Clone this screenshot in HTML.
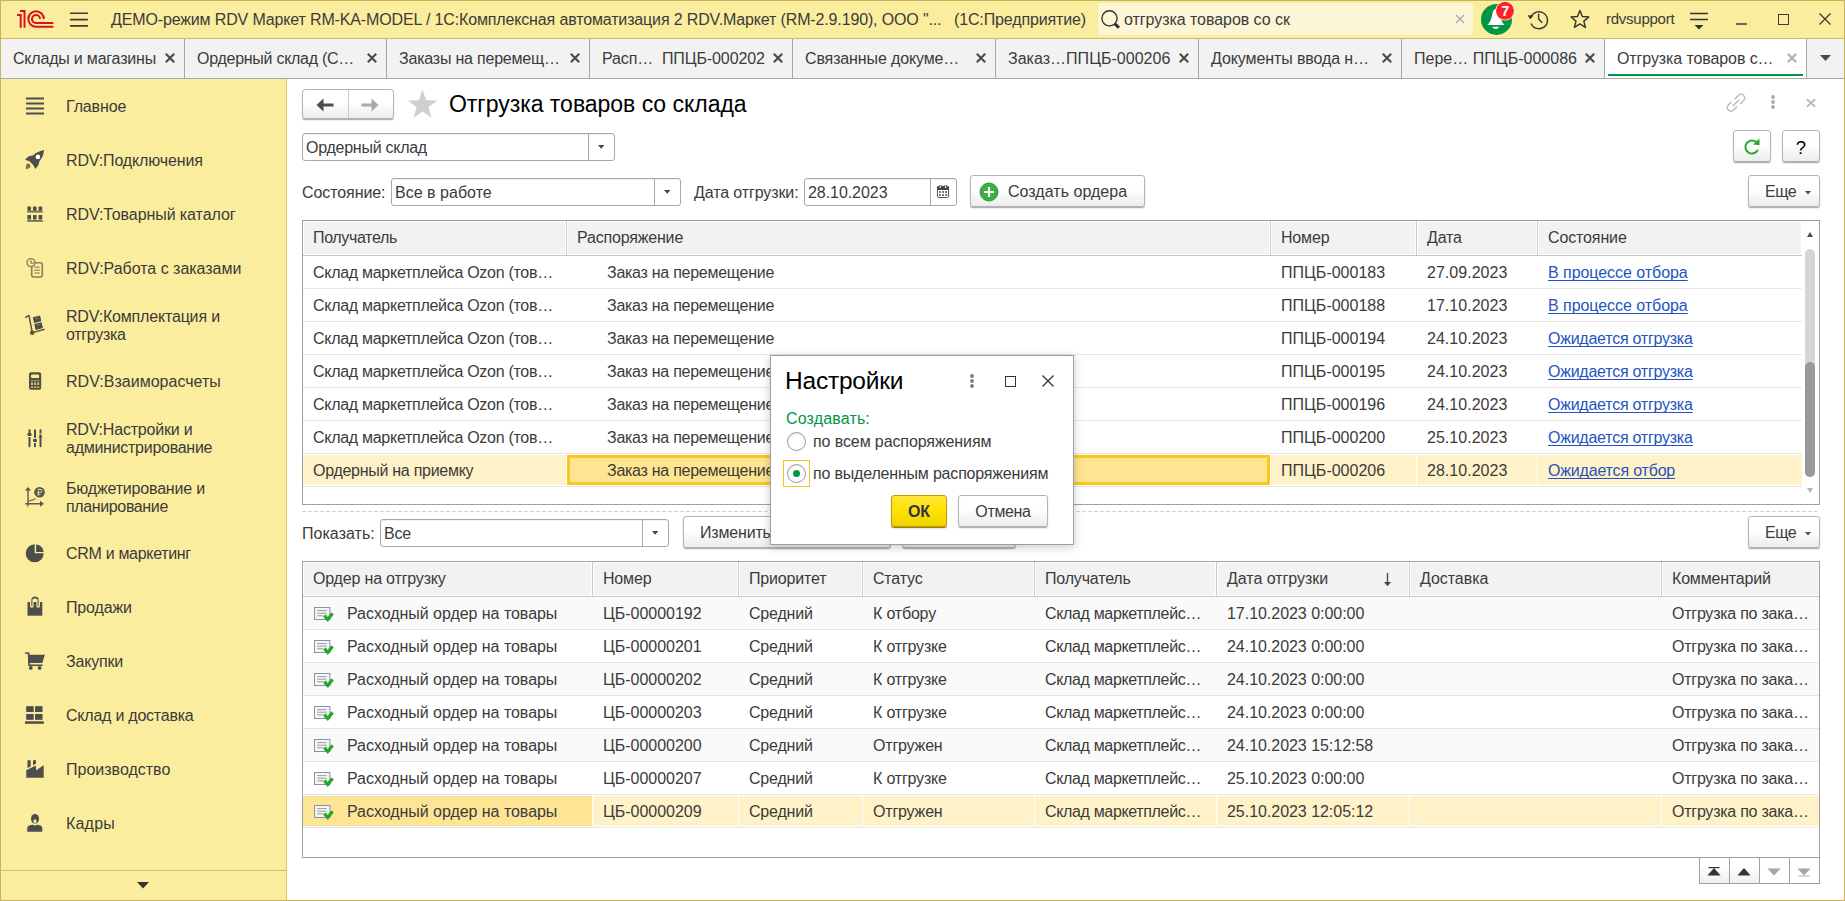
<!DOCTYPE html>
<html><head><meta charset="utf-8"><title>1C</title>
<style>
*{box-sizing:border-box;margin:0;padding:0}
html,body{width:1845px;height:901px;overflow:hidden;background:#fff}
body{font-family:"Liberation Sans",sans-serif;font-size:16px;color:#3b3b3b;position:relative;letter-spacing:-0.18px}
.a{position:absolute}
.t{position:absolute;white-space:nowrap;line-height:20px;height:20px;margin-top:1px}
.btn{position:absolute;border:1px solid #b4b4b4;border-radius:3px;background:linear-gradient(#ffffff 0%,#ffffff 45%,#ececec 100%);box-shadow:0 1px 1px rgba(0,0,0,.3),0 2px 1px rgba(0,0,0,.05)}
.inp{position:absolute;border:1px solid #a9a9a9;border-radius:3px;background:#fff;box-shadow:inset 0 1px 0 rgba(0,0,0,.06)}
.lnk{color:#2553c0;text-decoration:underline;text-underline-offset:2px;text-decoration-skip-ink:none;text-decoration-thickness:1px}
svg{position:absolute;overflow:visible}
</style></head><body>

<div class="a" style="left:0;top:0;width:1845px;height:901px;background:#c4b45c"></div>
<div class="a" style="left:1px;top:1px;width:1843px;height:37px;background:#fbed9e"></div>
<div class="a" style="left:1px;top:38px;width:1843px;height:1px;background:#c9bb6b"></div>
<div class="a" style="left:1px;top:39px;width:1843px;height:39px;background:#f2f2f2"></div>
<div class="a" style="left:1px;top:78px;width:1843px;height:1px;background:#a6a6a6"></div>
<div class="a" style="left:1px;top:79px;width:285px;height:821px;background:#fbed9e"></div>
<div class="a" style="left:286px;top:79px;width:1px;height:821px;background:#d6c66e"></div>
<div class="a" style="left:287px;top:79px;width:1557px;height:821px;background:#fff"></div>
<svg style="left:0px;top:0px" width="60" height="36" viewBox="0 0 60 36">
<g fill="none" stroke="#dc1018" stroke-width="2">
<path d="M17 15.1 H20.7 V27.8"/>
<path d="M20 11.1 H24.5 V27.8"/>
<path d="M43.9 18.9 A7.8 7.8 0 1 0 36.1 26.8 H53.4"/>
<path d="M40 19 A4 4 0 1 0 36 23 H53.4"/>
</g></svg>
<svg style="left:70px;top:10px" width="18" height="20" viewBox="0 0 18 20"><path d="M0.6 3.3 H17.4 M0.6 9.6 H17.4 M0.6 15.9 H17.4" stroke="#3a3a3a" stroke-width="1.6" stroke-linecap="round"/></svg>
<div class="t" style="left:111px;top:9px;color:#3b3b3b;letter-spacing:-0.144px">ДЕМО-режим RDV Маркет RM-KA-MODEL / 1С:Комплексная автоматизация 2 RDV.Маркет (RM-2.9.190), ООО "...</div>
<div class="t" style="left:954px;top:9px;color:#3b3b3b;letter-spacing:-0.14px">(1С:Предприятие)</div>
<div class="a" style="left:1098px;top:3px;width:375px;height:32px;background:#fdf6d6;border-radius:3px"></div>
<svg style="left:1100px;top:9px" width="22" height="22" viewBox="0 0 22 22"><circle cx="9.5" cy="9.3" r="7.6" fill="none" stroke="#333" stroke-width="1.4"/><path d="M14.7 14.6 L18.9 18.8" stroke="#2e2e2e" stroke-width="2.9" stroke-linecap="butt"/></svg>
<div class="t" style="left:1124px;top:9px;letter-spacing:-0.05px">отгрузка товаров со ск</div>
<svg style="left:1455px;top:14px" width="10" height="10" viewBox="0 0 10 10"><path d="M1 1 L9 9 M9 1 L1 9" stroke="#a9a9a9" stroke-width="1.2"/></svg>
<svg style="left:1480px;top:1px" width="36" height="36" viewBox="0 0 36 36">
<circle cx="16.5" cy="18.4" r="15.5" fill="#009646"/>
<path d="M16 8 C13.6 8 12.8 10.5 12.2 13.5 C11.4 17.5 10.5 21 7.4 24 H24.6 C21.5 21 20.6 17.5 19.8 13.5 C19.2 10.5 18.4 8 16 8 Z" fill="#fff"/>
<path d="M12.2 25.7 H19.2 C18.4 27.4 17.2 27.9 15.7 27.9 C14.2 27.9 13 27.4 12.2 25.7 Z" fill="#fff"/>
<circle cx="25" cy="9.8" r="9.7" fill="#fff"/>
<circle cx="25" cy="9.8" r="9" fill="#ff2020"/>
<text x="25.2" y="15" text-anchor="middle" font-family="Liberation Sans" font-weight="bold" font-size="14.5" fill="#fff" letter-spacing="0">7</text>
</svg>
<svg style="left:1525px;top:5px" width="30" height="30" viewBox="0 0 30 30">
<path d="M5.9 12.6 A8.5 8.5 0 1 1 6.1 18.4" fill="none" stroke="#333" stroke-width="1.4"/>
<path d="M2.6 10.2 L8.4 10.4 L5.2 14.2 Z" fill="#333"/>
<path d="M13.6 8.8 V14 L17.2 17.8" fill="none" stroke="#333" stroke-width="1.4"/></svg>
<svg style="left:1565px;top:5px" width="30" height="30" viewBox="0 0 30 30"><path d="M14.90 5.45 L17.31 11.53 L23.84 11.95 L18.80 16.12 L20.43 22.45 L14.90 18.95 L9.37 22.45 L11.00 16.12 L5.96 11.95 L12.49 11.53 Z" fill="none" stroke="#333" stroke-width="1.4" stroke-linejoin="round"/></svg>
<div class="t" style="left:1606px;top:8px;font-size:15px;letter-spacing:-0.25px">rdvsupport</div>
<svg style="left:1690px;top:10px" width="18" height="10" viewBox="0 0 18 10"><path d="M0 3.5 H18 M0 9.5 H18" stroke="#333" stroke-width="1.3"/></svg>
<svg style="left:1694px;top:25px" width="10" height="5" viewBox="0 0 10 5"><path d="M0.5 0 H9.5 L5 4.5 Z" fill="#333"/></svg>
<svg style="left:1736px;top:20px" width="11" height="8" viewBox="0 0 11 8"><path d="M0 4 H11" stroke="#333" stroke-width="1.4"/></svg>
<div class="a" style="left:1778px;top:14px;width:11px;height:11px;border:1.3px solid #3b3b3b"></div>
<svg style="left:1819px;top:13px" width="12" height="12" viewBox="0 0 12 12"><path d="M0.5 0.5 L11.5 11.5 M11.5 0.5 L0.5 11.5" stroke="#3b3b3b" stroke-width="1.3"/></svg>
<div class="a" style="left:184px;top:39px;width:1px;height:39px;background:#a6a6a6"></div>
<div class="t" style="left:13px;top:48px;white-space:pre;letter-spacing:-0.2px">Склады и магазины</div>
<svg style="left:165px;top:53px" width="10" height="10" viewBox="0 0 10 10"><path d="M0.8 0.8 L9.2 9.2 M9.2 0.8 L0.8 9.2" stroke="#4a4a4a" stroke-width="2.1"/></svg>
<div class="a" style="left:386px;top:39px;width:1px;height:39px;background:#a6a6a6"></div>
<div class="t" style="left:197px;top:48px;white-space:pre;letter-spacing:-0.27px">Ордерный склад (С…</div>
<svg style="left:367px;top:53px" width="10" height="10" viewBox="0 0 10 10"><path d="M0.8 0.8 L9.2 9.2 M9.2 0.8 L0.8 9.2" stroke="#4a4a4a" stroke-width="2.1"/></svg>
<div class="a" style="left:589px;top:39px;width:1px;height:39px;background:#a6a6a6"></div>
<div class="t" style="left:399px;top:48px;white-space:pre;letter-spacing:-0.21px">Заказы на перемещ…</div>
<svg style="left:570px;top:53px" width="10" height="10" viewBox="0 0 10 10"><path d="M0.8 0.8 L9.2 9.2 M9.2 0.8 L0.8 9.2" stroke="#4a4a4a" stroke-width="2.1"/></svg>
<div class="a" style="left:792px;top:39px;width:1px;height:39px;background:#a6a6a6"></div>
<div class="t" style="left:602px;top:48px;white-space:pre;letter-spacing:-0.1px">Расп…  ППЦБ-000202</div>
<svg style="left:773px;top:53px" width="10" height="10" viewBox="0 0 10 10"><path d="M0.8 0.8 L9.2 9.2 M9.2 0.8 L0.8 9.2" stroke="#4a4a4a" stroke-width="2.1"/></svg>
<div class="a" style="left:995px;top:39px;width:1px;height:39px;background:#a6a6a6"></div>
<div class="t" style="left:805px;top:48px;white-space:pre;letter-spacing:-0.13px">Связанные докуме…</div>
<svg style="left:976px;top:53px" width="10" height="10" viewBox="0 0 10 10"><path d="M0.8 0.8 L9.2 9.2 M9.2 0.8 L0.8 9.2" stroke="#4a4a4a" stroke-width="2.1"/></svg>
<div class="a" style="left:1198px;top:39px;width:1px;height:39px;background:#a6a6a6"></div>
<div class="t" style="left:1008px;top:48px;white-space:pre;letter-spacing:0.02px">Заказ…ППЦБ-000206</div>
<svg style="left:1179px;top:53px" width="10" height="10" viewBox="0 0 10 10"><path d="M0.8 0.8 L9.2 9.2 M9.2 0.8 L0.8 9.2" stroke="#4a4a4a" stroke-width="2.1"/></svg>
<div class="a" style="left:1401px;top:39px;width:1px;height:39px;background:#a6a6a6"></div>
<div class="t" style="left:1211px;top:48px;white-space:pre;letter-spacing:-0.1px">Документы ввода н…</div>
<svg style="left:1382px;top:53px" width="10" height="10" viewBox="0 0 10 10"><path d="M0.8 0.8 L9.2 9.2 M9.2 0.8 L0.8 9.2" stroke="#4a4a4a" stroke-width="2.1"/></svg>
<div class="a" style="left:1604px;top:39px;width:1px;height:39px;background:#a6a6a6"></div>
<div class="t" style="left:1414px;top:48px;white-space:pre;letter-spacing:0.02px">Пере… ППЦБ-000086</div>
<svg style="left:1585px;top:53px" width="10" height="10" viewBox="0 0 10 10"><path d="M0.8 0.8 L9.2 9.2 M9.2 0.8 L0.8 9.2" stroke="#4a4a4a" stroke-width="2.1"/></svg>
<div class="a" style="left:1605px;top:39px;width:201px;height:39px;background:#fff"></div>
<div class="a" style="left:1608px;top:74px;width:195px;height:2px;background:#009646"></div>
<div class="a" style="left:1806px;top:39px;width:1px;height:39px;background:#a6a6a6"></div>
<div class="t" style="left:1617px;top:48px;white-space:pre;letter-spacing:-0.1px">Отгрузка товаров с…</div>
<svg style="left:1787px;top:53px" width="10" height="10" viewBox="0 0 10 10"><path d="M0.8 0.8 L9.2 9.2 M9.2 0.8 L0.8 9.2" stroke="#b0b0b0" stroke-width="2.1"/></svg>
<svg style="left:1820px;top:55px" width="11" height="6" viewBox="0 0 11 6"><path d="M0 0 H11 L5.5 6 Z" fill="#4a4a4a"/></svg>
<svg style="left:25px;top:96px" width="20" height="20" viewBox="0 0 20 20"><path d="M1 2.5 H19 M1 7.5 H19 M1 12.5 H19 M1 17.5 H19" stroke="#4d4d4d" stroke-width="2.2"/></svg>
<div class="t" style="left:66px;top:96px;line-height:18px;height:auto;line-height:20px;color:#3b3b3b"><span style="letter-spacing:-0.13px">Главное</span></div>
<svg style="left:25px;top:150px" width="20" height="20" viewBox="0 0 20 20"><path d="M19 0 C14 1 10.5 3 8.3 5.2 L3.4 6.6 L0 9.8 L4.6 11.2 L8.6 15.6 L10.3 19 L13.2 15.4 L14.6 10.9 C17 8.4 18.6 5 19 0 Z" fill="#4d4d4d"/><circle cx="12.9" cy="6.9" r="2.3" fill="#fff"/><path d="M1.2 14.6 C2 13.2 4 13 5 14.4 C6 15.8 5.4 17.6 3.6 18.4 L0.8 19.2 Z" fill="#7a7552"/></svg>
<div class="t" style="left:66px;top:150px;line-height:18px;height:auto;line-height:20px;color:#3b3b3b"><span style="letter-spacing:-0.14px">RDV:Подключения</span></div>
<svg style="left:25px;top:204px" width="20" height="20" viewBox="0 0 20 20"><rect x="2.4" y="2.4" width="3.6" height="4.4" rx="0.6" fill="#4d4d4d"/><rect x="2.4" y="10.9" width="3.6" height="4.6" rx="0.6" fill="#4d4d4d"/><rect x="8.0" y="2.4" width="3.6" height="4.4" rx="0.6" fill="#4d4d4d"/><rect x="8.0" y="10.9" width="3.6" height="4.6" rx="0.6" fill="#4d4d4d"/><rect x="13.6" y="2.4" width="3.6" height="4.4" rx="0.6" fill="#4d4d4d"/><rect x="13.6" y="10.9" width="3.6" height="4.6" rx="0.6" fill="#4d4d4d"/><rect x="2.2" y="6.6" width="15.6" height="2" fill="#77724e"/><rect x="2.2" y="16" width="15.6" height="1.8" fill="#77724e"/></svg>
<div class="t" style="left:66px;top:204px;line-height:18px;height:auto;line-height:20px;color:#3b3b3b"><span style="letter-spacing:-0.08px">RDV:Товарный каталог</span></div>
<svg style="left:25px;top:258px" width="20" height="20" viewBox="0 0 20 20"><rect x="6.7" y="4.7" width="10.6" height="14.3" rx="2" fill="none" stroke="#857f5c" stroke-width="1.6"/><path d="M9.3 9.3 H14.7 M9.3 12.2 H14.7 M9.3 15 H14.7" stroke="#a49d70" stroke-width="1.5"/><circle cx="6" cy="4.6" r="4" fill="#fbed9e" stroke="#857f5c" stroke-width="1.4"/><path d="M6 2.2 V5.2 H8.8" fill="none" stroke="#857f5c" stroke-width="1.2"/></svg>
<div class="t" style="left:66px;top:258px;line-height:18px;height:auto;line-height:20px;color:#3b3b3b"><span style="letter-spacing:-0.02px">RDV:Работа с заказами</span></div>
<svg style="left:25px;top:315px" width="20" height="20" viewBox="0 0 20 20"><path d="M0.4 3 C1 1.6 2.4 0.8 4 0.8 L7.3 17.6 L19.6 14.2" fill="none" stroke="#5a563f" stroke-width="1.5"/><circle cx="7.2" cy="17.8" r="2.3" fill="#5a563f"/><path d="M7.8 2.3 L15.1 0.6 L16.3 6.2 L9 7.9 Z M9.3 8.9 L16.6 7.2 L17.9 13.1 L10.6 14.9 Z" fill="#4d4d4d"/><path d="M10.6 3.6 L13.4 3 M12 10.2 L14.8 9.6" stroke="#8a8460" stroke-width="1"/></svg>
<div class="t" style="left:66px;top:307px;line-height:18px;height:auto;color:#3b3b3b"><span style="letter-spacing:-0.18px">RDV:Комплектация и</span><br><span style="letter-spacing:-0.3px">отгрузка</span></div>
<svg style="left:25px;top:371px" width="20" height="20" viewBox="0 0 20 20"><rect x="4" y="1.2" width="12.2" height="17.6" rx="2" fill="#55523e"/><rect x="6" y="3.6" width="8.2" height="3.4" rx="1.3" fill="#fbed9e"/><rect x="6" y="9.2" width="2" height="1" fill="#c7be80"/><rect x="6" y="11.4" width="2" height="2.6" fill="#c7be80"/><rect x="6" y="15.4" width="2" height="1.6" fill="#c7be80"/><rect x="9.1" y="9.2" width="2" height="1" fill="#c7be80"/><rect x="9.1" y="11.4" width="2" height="2.6" fill="#c7be80"/><rect x="9.1" y="15.4" width="2" height="1.6" fill="#c7be80"/><rect x="12.2" y="9.2" width="2" height="1" fill="#c7be80"/><rect x="12.2" y="11.4" width="2" height="2.6" fill="#c7be80"/><rect x="12.2" y="15.4" width="2" height="1.6" fill="#c7be80"/></svg>
<div class="t" style="left:66px;top:371px;line-height:18px;height:auto;line-height:20px;color:#3b3b3b"><span style="letter-spacing:0.02px">RDV:Взаиморасчеты</span></div>
<svg style="left:25px;top:428px" width="20" height="20" viewBox="0 0 20 20"><path d="M4.5 2.3 V18.3 M10 2.3 V18.3 M15.5 2.3 V18.3" stroke="#4d4d4d" stroke-width="2" stroke-linecap="round"/><path d="M3 8.5 H6 M8.5 10.3 H11.5 M8.5 14.5 H11.5 M14 5.9 H17" stroke="#fbed9e" stroke-width="1"/><rect x="2.5" y="5" width="4" height="3" rx="1" fill="#4d4d4d"/><rect x="8" y="11" width="4" height="3" rx="1" fill="#4d4d4d"/><path d="M13.5 9.4 L15.5 6.6 L17.5 9.4 Z" fill="#4d4d4d"/></svg>
<div class="t" style="left:66px;top:420px;line-height:18px;height:auto;color:#3b3b3b"><span style="letter-spacing:-0.2px">RDV:Настройки и</span><br><span style="letter-spacing:-0.27px">администрирование</span></div>
<svg style="left:25px;top:487px" width="20" height="20" viewBox="0 0 20 20"><path d="M3 2 V19.6 M0.2 16.8 H17" fill="none" stroke="#5f5b45" stroke-width="1.4"/><path d="M0 3.6 L3 0 L6 3.6 Z M15 13.8 L18.9 16.8 L15 19.8 Z" fill="#555"/><path d="M3.4 14.6 L6 13 L7 13.4 L10.6 11.4" fill="none" stroke="#5f5b45" stroke-width="1.1"/><circle cx="14.5" cy="5.3" r="5.3" fill="#555"/><path d="M13.4 8.8 V2.4 H15.3 A1.55 1.55 0 0 1 15.3 5.5 H12.2 M12.2 7.2 H15.6" fill="none" stroke="#cfc58a" stroke-width="1.1"/></svg>
<div class="t" style="left:66px;top:479px;line-height:18px;height:auto;color:#3b3b3b"><span style="letter-spacing:-0.179px">Бюджетирование и</span><br><span style="letter-spacing:-0.37px">планирование</span></div>
<svg style="left:25px;top:543px" width="20" height="20" viewBox="0 0 20 20"><path d="M9.7 10.3 V1.3 A9 9 0 1 0 18.7 10.3 Z" fill="#4d4d4d"/><path d="M11.1 8.9 V1.4 A7.6 7.6 0 0 1 18.6 8.9 Z" fill="#4d4d4d"/></svg>
<div class="t" style="left:66px;top:543px;line-height:18px;height:auto;line-height:20px;color:#3b3b3b"><span style="letter-spacing:-0.31px">CRM и маркетинг</span></div>
<svg style="left:25px;top:597px" width="20" height="20" viewBox="0 0 20 20"><rect x="2.5" y="5" width="14.8" height="13.7" fill="#4d4d4d"/><path d="M6.8 9 V3.4 A3.2 3.2 0 0 1 13.2 3.4 V9" fill="none" stroke="#fbed9e" stroke-width="3.6" stroke-linecap="round"/><rect x="2.5" y="0" width="14.8" height="5" fill="#fbed9e"/><path d="M6.8 8.6 V3.4 A3.2 3.2 0 0 1 13.2 3.4 V8.6" fill="none" stroke="#8a845e" stroke-width="1.6" stroke-linecap="round"/><path d="M7.4 1.8 A3.2 3.2 0 0 1 12.6 1.8" fill="none" stroke="#4d4d4d" stroke-width="1.6"/></svg>
<div class="t" style="left:66px;top:597px;line-height:18px;height:auto;line-height:20px;color:#3b3b3b"><span style="letter-spacing:-0.15px">Продажи</span></div>
<svg style="left:25px;top:651px" width="20" height="20" viewBox="0 0 20 20"><path d="M0 2 H3.6 L4.1 14.3 H17.6" fill="none" stroke="#4d4d4d" stroke-width="1.6"/><path d="M2.8 3.8 H19.8 L17.3 12 H3.3 Z" fill="#4d4d4d"/><circle cx="5.8" cy="16.9" r="1.9" fill="#4d4d4d"/><circle cx="14.6" cy="16.9" r="1.9" fill="#4d4d4d"/></svg>
<div class="t" style="left:66px;top:651px;line-height:18px;height:auto;line-height:20px;color:#3b3b3b"><span style="letter-spacing:-0.2px">Закупки</span></div>
<svg style="left:25px;top:705px" width="20" height="20" viewBox="0 0 20 20"><rect x="1.2" y="1.2" width="7.5" height="5.8" fill="#4d4d4d"/><rect x="10" y="1.2" width="7.5" height="5.8" fill="#4d4d4d"/><rect x="1.2" y="9" width="7.5" height="5.8" fill="#4d4d4d"/><rect x="10" y="9" width="7.5" height="5.8" fill="#4d4d4d"/><rect x="0" y="16.3" width="18.8" height="2.5" fill="#4d4d4d"/></svg>
<div class="t" style="left:66px;top:705px;line-height:18px;height:auto;line-height:20px;color:#3b3b3b"><span style="letter-spacing:-0.229px">Склад и доставка</span></div>
<svg style="left:25px;top:759px" width="20" height="20" viewBox="0 0 20 20"><path d="M1.3 11.3 L10.7 6.5 L11.3 11.3 L18.7 6.3 V18.7 H1.3 Z" fill="#4d4d4d"/><path d="M2.5 1.3 H5.7 V7.4 L2.5 9 Z M8 1.3 H11 V4.6 L8 6.2 Z" fill="#4d4d4d"/></svg>
<div class="t" style="left:66px;top:759px;line-height:18px;height:auto;line-height:20px;color:#3b3b3b"><span style="letter-spacing:0.0px">Производство</span></div>
<svg style="left:25px;top:813px" width="20" height="20" viewBox="0 0 20 20"><ellipse cx="10" cy="5.8" rx="4" ry="4.9" fill="#4d4d4d"/><ellipse cx="10" cy="8.3" rx="1.5" ry="2.1" fill="#fbed9e"/><path d="M2.3 18.8 V15.2 C2.3 12.6 5.6 11.9 8 11.7 L10 12.7 L12 11.7 C14.4 11.9 17.3 12.6 17.3 15.2 V18.8 Z" fill="#4d4d4d"/></svg>
<div class="t" style="left:66px;top:813px;line-height:18px;height:auto;line-height:20px;color:#3b3b3b"><span style="letter-spacing:0.2px">Кадры</span></div>
<div class="a" style="left:1px;top:870px;width:285px;height:1px;background:#d0c070"></div>
<svg style="left:137px;top:881.6px" width="12" height="7" viewBox="0 0 12 7"><path d="M0 0 H12 L6 6.6 Z" fill="#333"/></svg>
<div class="btn" style="left:302px;top:89px;width:92px;height:30px"></div>
<div class="a" style="left:348px;top:90px;width:1px;height:28px;background:#c8c8c8"></div>
<svg style="left:316px;top:97.5px" width="18" height="14" viewBox="0 0 18 14"><path d="M0.5 7 L7.5 0.6 V5.4 H17.5 V8.6 H7.5 V13.4 Z" fill="#4d4d4d"/></svg>
<svg style="left:361px;top:97.5px" width="18" height="14" viewBox="0 0 18 14"><path d="M17.5 7 L10.5 0.6 V5.4 H0.5 V8.6 H10.5 V13.4 Z" fill="#a8a8a8"/></svg>
<svg style="left:407px;top:89px" width="31" height="30" viewBox="0 0 31 30"><path d="M15.5 0.8 L19.2 11.2 L30.2 11.4 L21.4 18.2 L24.6 28.8 L15.5 22.4 L6.4 28.8 L9.6 18.2 L0.8 11.4 L11.8 11.2 Z" fill="#cfcfcf"/></svg>
<div class="t" style="left:449px;top:89px;font-size:23px;line-height:28px;height:28px;color:#000;letter-spacing:-0.03px">Отгрузка товаров со склада</div>
<svg style="left:1726px;top:93px" width="20" height="20" viewBox="0 0 20 20"><g fill="none" stroke="#b9b9b9" stroke-width="1.45" stroke-linecap="round"><path d="M9 5.8 L12.4 2.4 A3.65 3.65 0 0 1 17.6 7.6 L14.6 10.6"/><path d="M5 9.3 L2.4 11.9 A3.65 3.65 0 0 0 7.6 17.1 L10.6 14.1"/><path d="M7.2 12.6 L12.6 7.4"/></g></svg>
<svg style="left:1770px;top:94.2px" width="6" height="6" viewBox="0 0 6 6"><circle cx="3" cy="3" r="1.95" fill="#aaaaaa"/></svg>
<svg style="left:1770px;top:99.2px" width="6" height="6" viewBox="0 0 6 6"><circle cx="3" cy="3" r="1.95" fill="#aaaaaa"/></svg>
<svg style="left:1770px;top:104.2px" width="6" height="6" viewBox="0 0 6 6"><circle cx="3" cy="3" r="1.95" fill="#aaaaaa"/></svg>
<svg style="left:1806px;top:98px" width="10" height="10" viewBox="0 0 10 10"><path d="M0.9 1.1 L9.1 8.9 M9.1 1.1 L0.9 8.9" stroke="#b0b0b0" stroke-width="1.5"/></svg>
<div class="inp" style="left:302px;top:133px;width:313px;height:28px"></div>
<div class="t" style="left:306px;top:137px;color:#3b3b3b;letter-spacing:-0.26px">Ордерный склад</div>
<div class="a" style="left:588px;top:134px;width:1px;height:26px;background:#a9a9a9"></div>
<svg style="left:598px;top:145px" width="7" height="4" viewBox="0 0 7 4"><path d="M0 0 H6.4 L3.2 3.8 Z" fill="#444"/></svg>
<div class="t" style="left:302px;top:182px;color:#3b3b3b;letter-spacing:-0.08px">Состояние:</div>
<div class="inp" style="left:391px;top:178px;width:290px;height:28px"></div>
<div class="t" style="left:395px;top:182px;color:#3b3b3b;letter-spacing:0.02px">Все в работе</div>
<div class="a" style="left:654px;top:179px;width:1px;height:26px;background:#a9a9a9"></div>
<svg style="left:664px;top:190px" width="7" height="4" viewBox="0 0 7 4"><path d="M0 0 H6.4 L3.2 3.8 Z" fill="#444"/></svg>
<div class="t" style="left:694px;top:182px;color:#3b3b3b;letter-spacing:-0.11px">Дата отгрузки:</div>
<div class="inp" style="left:804px;top:178px;width:153px;height:28px"></div>
<div class="t" style="left:808px;top:182px;color:#3b3b3b;letter-spacing:-0.06px">28.10.2023</div>
<div class="a" style="left:930px;top:179px;width:1px;height:26px;background:#a9a9a9"></div>
<svg style="left:937px;top:185px" width="12" height="13" viewBox="0 0 12 13"><rect x="0.45" y="1.4" width="11.1" height="11.1" rx="1.3" fill="#fff" stroke="#444" stroke-width="0.9"/><path d="M0.1 5 V2.6 A1.5 1.5 0 0 1 1.6 1.1 H10.4 A1.5 1.5 0 0 1 11.9 2.6 V5 Z" fill="#444"/><ellipse cx="3.3" cy="1.8" rx="1.5" ry="1.8" fill="#444"/><ellipse cx="8.6" cy="1.8" rx="1.5" ry="1.8" fill="#444"/><ellipse cx="3.3" cy="1.9" rx="0.7" ry="1.15" fill="#fff"/><ellipse cx="8.6" cy="1.9" rx="0.7" ry="1.15" fill="#fff"/>
<g fill="#333"><rect x="2.1" y="6.2" width="1.6" height="1.6"/><rect x="5.2" y="6.2" width="1.6" height="1.6"/><rect x="8.3" y="6.2" width="1.6" height="1.6"/><rect x="2.1" y="9.2" width="1.6" height="1.6"/><rect x="5.2" y="9.2" width="1.6" height="1.6"/><rect x="8.3" y="9.2" width="1.6" height="1.6"/></g></svg>
<div class="btn" style="left:970px;top:175px;width:175px;height:32px"></div>
<svg style="left:979px;top:182px" width="20" height="20" viewBox="0 0 20 20"><circle cx="10" cy="10" r="9" fill="#3cb043" stroke="#2e9a36" stroke-width="1"/><path d="M10 5 V15 M5 10 H15" stroke="#fff" stroke-width="2.2"/></svg>
<div class="t" style="left:1008px;top:181px;color:#3b3b3b;letter-spacing:0.03px">Создать ордера</div>
<div class="btn" style="left:1733px;top:130px;width:38px;height:32px"></div>
<svg style="left:1742px;top:137px" width="20" height="20" viewBox="0 0 20 20"><path d="M15.9 12.9 A6.6 6.6 0 1 1 14.4 5.1" fill="none" stroke="#2aa62e" stroke-width="2"/><path d="M11 7.4 L17.6 8.2 L17.4 1.4 Z" fill="#2aa62e"/></svg>
<div class="btn" style="left:1782px;top:130px;width:38px;height:32px"></div>
<div class="t" style="left:1782px;top:137px;width:38px;text-align:center;color:#000;font-size:18.5px;letter-spacing:0">?</div>
<div class="btn" style="left:1748px;top:175px;width:72px;height:32px"></div>
<div class="t" style="left:1765px;top:181px;color:#3b3b3b;letter-spacing:-0.5px">Еще</div>
<svg style="left:1805px;top:190.8px" width="6" height="4" viewBox="0 0 6 4"><path d="M0 0 H6 L3 3.5 Z" fill="#4d4d4d"/></svg>
<div class="btn" style="left:1748px;top:516px;width:72px;height:32px"></div>
<div class="t" style="left:1765px;top:522px;color:#3b3b3b;letter-spacing:-0.5px">Еще</div>
<svg style="left:1805px;top:531.8px" width="6" height="4" viewBox="0 0 6 4"><path d="M0 0 H6 L3 3.5 Z" fill="#4d4d4d"/></svg>
<div class="a" style="left:302px;top:220px;width:1518px;height:285px;border:1px solid #a0a0a0;background:#fff"></div>
<div class="a" style="left:303px;top:221px;width:1498px;height:34px;background:#f2f2f2;border-top:1px solid #fff;border-left:1px solid #fff;border-bottom:1px solid #fff"></div>
<div class="a" style="left:303px;top:255px;width:1499px;height:1px;background:#c6c6c6"></div>
<div class="t" style="left:313px;top:227px;color:#3b3b3b;letter-spacing:-0.36px">Получатель</div>
<div class="a" style="left:565px;top:222px;width:3px;height:33px;background:#fff"></div>
<div class="a" style="left:566px;top:221px;width:1px;height:34px;background:#cbcbcb"></div>
<div class="t" style="left:577px;top:227px;color:#3b3b3b;letter-spacing:-0.18px">Распоряжение</div>
<div class="a" style="left:1269px;top:222px;width:3px;height:33px;background:#fff"></div>
<div class="a" style="left:1270px;top:221px;width:1px;height:34px;background:#cbcbcb"></div>
<div class="t" style="left:1281px;top:227px;color:#3b3b3b;letter-spacing:-0.18px">Номер</div>
<div class="a" style="left:1415px;top:222px;width:3px;height:33px;background:#fff"></div>
<div class="a" style="left:1416px;top:221px;width:1px;height:34px;background:#cbcbcb"></div>
<div class="t" style="left:1427px;top:227px;color:#3b3b3b;letter-spacing:-0.18px">Дата</div>
<div class="a" style="left:1536px;top:222px;width:3px;height:33px;background:#fff"></div>
<div class="a" style="left:1537px;top:221px;width:1px;height:34px;background:#cbcbcb"></div>
<div class="t" style="left:1548px;top:227px;color:#3b3b3b;letter-spacing:-0.13px">Состояние</div>
<div class="a" style="left:303px;top:288px;width:1499px;height:1px;background:#e6e6e6"></div>
<div class="t" style="left:313px;top:262px;letter-spacing:-0.285px">Склад маркетплейса Ozon (тов…</div>
<div class="t" style="left:607px;top:262px;letter-spacing:-0.27px">Заказ на перемещение</div>
<div class="t" style="left:1281px;top:262px;letter-spacing:0.01px">ППЦБ-000183</div>
<div class="t" style="left:1427px;top:262px;letter-spacing:0.03px">27.09.2023</div>
<div class="t lnk" style="left:1548px;top:262px;letter-spacing:-0.05px">В процессе отбора</div>
<div class="a" style="left:303px;top:321px;width:1499px;height:1px;background:#e6e6e6"></div>
<div class="t" style="left:313px;top:295px;letter-spacing:-0.285px">Склад маркетплейса Ozon (тов…</div>
<div class="t" style="left:607px;top:295px;letter-spacing:-0.27px">Заказ на перемещение</div>
<div class="t" style="left:1281px;top:295px;letter-spacing:0.01px">ППЦБ-000188</div>
<div class="t" style="left:1427px;top:295px;letter-spacing:0.03px">17.10.2023</div>
<div class="t lnk" style="left:1548px;top:295px;letter-spacing:-0.05px">В процессе отбора</div>
<div class="a" style="left:303px;top:354px;width:1499px;height:1px;background:#e6e6e6"></div>
<div class="t" style="left:313px;top:328px;letter-spacing:-0.285px">Склад маркетплейса Ozon (тов…</div>
<div class="t" style="left:607px;top:328px;letter-spacing:-0.27px">Заказ на перемещение</div>
<div class="t" style="left:1281px;top:328px;letter-spacing:0.01px">ППЦБ-000194</div>
<div class="t" style="left:1427px;top:328px;letter-spacing:0.03px">24.10.2023</div>
<div class="t lnk" style="left:1548px;top:328px;letter-spacing:-0.24px">Ожидается отгрузка</div>
<div class="a" style="left:303px;top:387px;width:1499px;height:1px;background:#e6e6e6"></div>
<div class="t" style="left:313px;top:361px;letter-spacing:-0.285px">Склад маркетплейса Ozon (тов…</div>
<div class="t" style="left:607px;top:361px;letter-spacing:-0.27px">Заказ на перемещение</div>
<div class="t" style="left:1281px;top:361px;letter-spacing:0.01px">ППЦБ-000195</div>
<div class="t" style="left:1427px;top:361px;letter-spacing:0.03px">24.10.2023</div>
<div class="t lnk" style="left:1548px;top:361px;letter-spacing:-0.24px">Ожидается отгрузка</div>
<div class="a" style="left:303px;top:420px;width:1499px;height:1px;background:#e6e6e6"></div>
<div class="t" style="left:313px;top:394px;letter-spacing:-0.285px">Склад маркетплейса Ozon (тов…</div>
<div class="t" style="left:607px;top:394px;letter-spacing:-0.27px">Заказ на перемещение</div>
<div class="t" style="left:1281px;top:394px;letter-spacing:0.01px">ППЦБ-000196</div>
<div class="t" style="left:1427px;top:394px;letter-spacing:0.03px">24.10.2023</div>
<div class="t lnk" style="left:1548px;top:394px;letter-spacing:-0.24px">Ожидается отгрузка</div>
<div class="a" style="left:303px;top:453px;width:1499px;height:1px;background:#e6e6e6"></div>
<div class="t" style="left:313px;top:427px;letter-spacing:-0.285px">Склад маркетплейса Ozon (тов…</div>
<div class="t" style="left:607px;top:427px;letter-spacing:-0.27px">Заказ на перемещение</div>
<div class="t" style="left:1281px;top:427px;letter-spacing:0.01px">ППЦБ-000200</div>
<div class="t" style="left:1427px;top:427px;letter-spacing:0.03px">25.10.2023</div>
<div class="t lnk" style="left:1548px;top:427px;letter-spacing:-0.24px">Ожидается отгрузка</div>
<div class="a" style="left:303px;top:486px;width:1499px;height:1px;background:#e6e6e6"></div>
<div class="a" style="left:303px;top:455px;width:1499px;height:30px;background:#fff2c8"></div>
<div class="a" style="left:566px;top:455px;width:1px;height:30px;background:#fff"></div>
<div class="a" style="left:1270px;top:455px;width:1px;height:30px;background:#fff"></div>
<div class="a" style="left:1416px;top:455px;width:1px;height:30px;background:#fff"></div>
<div class="a" style="left:1537px;top:455px;width:1px;height:30px;background:#fff"></div>
<div class="a" style="left:567px;top:455px;width:703px;height:30px;background:#ffe591;border:3px solid #f9c81c"></div>
<div class="t" style="left:313px;top:460px;letter-spacing:-0.28px">Ордерный на приемку</div>
<div class="t" style="left:607px;top:460px;letter-spacing:-0.27px">Заказ на перемещение</div>
<div class="t" style="left:1281px;top:460px;letter-spacing:0.01px">ППЦБ-000206</div>
<div class="t" style="left:1427px;top:460px;letter-spacing:0.03px">28.10.2023</div>
<div class="t lnk" style="left:1548px;top:460px;letter-spacing:-0.18px">Ожидается отбор</div>
<svg style="left:1807px;top:232px" width="6" height="5" viewBox="0 0 6 5"><path d="M3 0 L6 5 H0 Z" fill="#4d4d4d"/></svg>
<div class="a" style="left:1805px;top:249px;width:10px;height:228px;border-radius:5px;background:#d5d5d5"></div>
<div class="a" style="left:1805px;top:362px;width:10px;height:115px;border-radius:5px;background:#999"></div>
<svg style="left:1807px;top:488px" width="6" height="5" viewBox="0 0 6 5"><path d="M0 0 H6 L3 5 Z" fill="#b5b5b5"/></svg>
<div class="a" style="left:302px;top:511px;width:1517px;height:1px;background:repeating-linear-gradient(90deg,#d6d6d6 0,#d6d6d6 4px,transparent 4px,transparent 6px)"></div>
<div class="t" style="left:302px;top:523px;color:#3b3b3b;letter-spacing:0.04px">Показать:</div>
<div class="inp" style="left:380px;top:519px;width:289px;height:28px"></div>
<div class="t" style="left:384px;top:523px;color:#3b3b3b;letter-spacing:-0.26px">Все</div>
<div class="a" style="left:642px;top:520px;width:1px;height:26px;background:#a9a9a9"></div>
<svg style="left:652px;top:531px" width="7" height="4" viewBox="0 0 7 4"><path d="M0 0 H6.4 L3.2 3.8 Z" fill="#444"/></svg>
<div class="btn" style="left:683px;top:516px;width:208px;height:32px"></div>
<div class="t" style="left:700px;top:522px;color:#3b3b3b">Изменить</div>
<div class="btn" style="left:902px;top:516px;width:114px;height:32px"></div>
<div class="a" style="left:302px;top:561px;width:1518px;height:297px;border:1px solid #a0a0a0;background:#fff"></div>
<div class="a" style="left:303px;top:562px;width:1516px;height:34px;background:#f2f2f2;border-top:1px solid #fff;border-left:1px solid #fff;border-bottom:1px solid #fff"></div>
<div class="a" style="left:303px;top:596px;width:1516px;height:1px;background:#c6c6c6"></div>
<div class="t" style="left:313px;top:568px;color:#3b3b3b;letter-spacing:-0.18px">Ордер на отгрузку</div>
<div class="a" style="left:591px;top:563px;width:3px;height:33px;background:#fff"></div>
<div class="a" style="left:592px;top:562px;width:1px;height:34px;background:#cbcbcb"></div>
<div class="t" style="left:603px;top:568px;color:#3b3b3b;letter-spacing:-0.18px">Номер</div>
<div class="a" style="left:737px;top:563px;width:3px;height:33px;background:#fff"></div>
<div class="a" style="left:738px;top:562px;width:1px;height:34px;background:#cbcbcb"></div>
<div class="t" style="left:749px;top:568px;color:#3b3b3b;letter-spacing:-0.18px">Приоритет</div>
<div class="a" style="left:861px;top:563px;width:3px;height:33px;background:#fff"></div>
<div class="a" style="left:862px;top:562px;width:1px;height:34px;background:#cbcbcb"></div>
<div class="t" style="left:873px;top:568px;color:#3b3b3b;letter-spacing:-0.18px">Статус</div>
<div class="a" style="left:1033px;top:563px;width:3px;height:33px;background:#fff"></div>
<div class="a" style="left:1034px;top:562px;width:1px;height:34px;background:#cbcbcb"></div>
<div class="t" style="left:1045px;top:568px;color:#3b3b3b;letter-spacing:-0.18px">Получатель</div>
<div class="a" style="left:1215px;top:563px;width:3px;height:33px;background:#fff"></div>
<div class="a" style="left:1216px;top:562px;width:1px;height:34px;background:#cbcbcb"></div>
<div class="t" style="left:1227px;top:568px;color:#3b3b3b;letter-spacing:-0.03px">Дата отгрузки</div>
<div class="a" style="left:1408px;top:563px;width:3px;height:33px;background:#fff"></div>
<div class="a" style="left:1409px;top:562px;width:1px;height:34px;background:#cbcbcb"></div>
<div class="t" style="left:1420px;top:568px;color:#3b3b3b;letter-spacing:-0.05px">Доставка</div>
<div class="a" style="left:1660px;top:563px;width:3px;height:33px;background:#fff"></div>
<div class="a" style="left:1661px;top:562px;width:1px;height:34px;background:#cbcbcb"></div>
<div class="t" style="left:1672px;top:568px;color:#3b3b3b;letter-spacing:-0.19px">Комментарий</div>
<svg style="left:1383px;top:572px" width="9" height="15" viewBox="0 0 9 15"><path d="M4.5 1 V10.5" fill="none" stroke="#444" stroke-width="1.3"/><path d="M1 10 H8 L4.5 14.3 Z" fill="#444"/></svg>
<div class="a" style="left:303px;top:597px;width:1516px;height:32px;background:#fafafa"></div>
<div class="a" style="left:303px;top:629px;width:1516px;height:1px;background:#e6e6e6"></div>
<svg style="left:314px;top:607px" width="22" height="18" viewBox="0 0 22 18"><rect x="0.5" y="0.5" width="15.4" height="12" fill="#f6f6f6" stroke="#8493a8" stroke-width="1"/><path d="M3.2 3.6 H12.6 M3.2 6.2 H12.6 M3.2 8.8 H9.4" stroke="#9a9a9a" stroke-width="1"/><path d="M9.6 9.8 L11.6 7.8 L13.6 10.4 L17.4 5.8 L19.4 7.4 L13.8 14.6 Z" fill="#21ad21" stroke="#158c15" stroke-width="0.6" stroke-linejoin="round"/></svg>
<div class="t" style="left:347px;top:603px;letter-spacing:-0.04px">Расходный ордер на товары</div>
<div class="t" style="left:603px;top:603px;letter-spacing:-0.03px">ЦБ-00000192</div>
<div class="t" style="left:749px;top:603px;letter-spacing:-0.18px">Средний</div>
<div class="t" style="left:873px;top:603px;letter-spacing:-0.18px">К отбору</div>
<div class="t" style="left:1045px;top:603px;letter-spacing:-0.345px">Склад маркетплейс…</div>
<div class="t" style="left:1227px;top:603px;letter-spacing:-0.035px">17.10.2023 0:00:00</div>
<div class="t" style="left:1672px;top:603px;letter-spacing:-0.24px">Отгрузка по зака…</div>
<div class="a" style="left:303px;top:662px;width:1516px;height:1px;background:#e6e6e6"></div>
<svg style="left:314px;top:640px" width="22" height="18" viewBox="0 0 22 18"><rect x="0.5" y="0.5" width="15.4" height="12" fill="#f6f6f6" stroke="#8493a8" stroke-width="1"/><path d="M3.2 3.6 H12.6 M3.2 6.2 H12.6 M3.2 8.8 H9.4" stroke="#9a9a9a" stroke-width="1"/><path d="M9.6 9.8 L11.6 7.8 L13.6 10.4 L17.4 5.8 L19.4 7.4 L13.8 14.6 Z" fill="#21ad21" stroke="#158c15" stroke-width="0.6" stroke-linejoin="round"/></svg>
<div class="t" style="left:347px;top:636px;letter-spacing:-0.04px">Расходный ордер на товары</div>
<div class="t" style="left:603px;top:636px;letter-spacing:-0.03px">ЦБ-00000201</div>
<div class="t" style="left:749px;top:636px;letter-spacing:-0.18px">Средний</div>
<div class="t" style="left:873px;top:636px;letter-spacing:-0.18px">К отгрузке</div>
<div class="t" style="left:1045px;top:636px;letter-spacing:-0.345px">Склад маркетплейс…</div>
<div class="t" style="left:1227px;top:636px;letter-spacing:-0.035px">24.10.2023 0:00:00</div>
<div class="t" style="left:1672px;top:636px;letter-spacing:-0.24px">Отгрузка по зака…</div>
<div class="a" style="left:303px;top:663px;width:1516px;height:32px;background:#fafafa"></div>
<div class="a" style="left:303px;top:695px;width:1516px;height:1px;background:#e6e6e6"></div>
<svg style="left:314px;top:673px" width="22" height="18" viewBox="0 0 22 18"><rect x="0.5" y="0.5" width="15.4" height="12" fill="#f6f6f6" stroke="#8493a8" stroke-width="1"/><path d="M3.2 3.6 H12.6 M3.2 6.2 H12.6 M3.2 8.8 H9.4" stroke="#9a9a9a" stroke-width="1"/><path d="M9.6 9.8 L11.6 7.8 L13.6 10.4 L17.4 5.8 L19.4 7.4 L13.8 14.6 Z" fill="#21ad21" stroke="#158c15" stroke-width="0.6" stroke-linejoin="round"/></svg>
<div class="t" style="left:347px;top:669px;letter-spacing:-0.04px">Расходный ордер на товары</div>
<div class="t" style="left:603px;top:669px;letter-spacing:-0.03px">ЦБ-00000202</div>
<div class="t" style="left:749px;top:669px;letter-spacing:-0.18px">Средний</div>
<div class="t" style="left:873px;top:669px;letter-spacing:-0.18px">К отгрузке</div>
<div class="t" style="left:1045px;top:669px;letter-spacing:-0.345px">Склад маркетплейс…</div>
<div class="t" style="left:1227px;top:669px;letter-spacing:-0.035px">24.10.2023 0:00:00</div>
<div class="t" style="left:1672px;top:669px;letter-spacing:-0.24px">Отгрузка по зака…</div>
<div class="a" style="left:303px;top:728px;width:1516px;height:1px;background:#e6e6e6"></div>
<svg style="left:314px;top:706px" width="22" height="18" viewBox="0 0 22 18"><rect x="0.5" y="0.5" width="15.4" height="12" fill="#f6f6f6" stroke="#8493a8" stroke-width="1"/><path d="M3.2 3.6 H12.6 M3.2 6.2 H12.6 M3.2 8.8 H9.4" stroke="#9a9a9a" stroke-width="1"/><path d="M9.6 9.8 L11.6 7.8 L13.6 10.4 L17.4 5.8 L19.4 7.4 L13.8 14.6 Z" fill="#21ad21" stroke="#158c15" stroke-width="0.6" stroke-linejoin="round"/></svg>
<div class="t" style="left:347px;top:702px;letter-spacing:-0.04px">Расходный ордер на товары</div>
<div class="t" style="left:603px;top:702px;letter-spacing:-0.03px">ЦБ-00000203</div>
<div class="t" style="left:749px;top:702px;letter-spacing:-0.18px">Средний</div>
<div class="t" style="left:873px;top:702px;letter-spacing:-0.18px">К отгрузке</div>
<div class="t" style="left:1045px;top:702px;letter-spacing:-0.345px">Склад маркетплейс…</div>
<div class="t" style="left:1227px;top:702px;letter-spacing:-0.035px">24.10.2023 0:00:00</div>
<div class="t" style="left:1672px;top:702px;letter-spacing:-0.24px">Отгрузка по зака…</div>
<div class="a" style="left:303px;top:729px;width:1516px;height:32px;background:#fafafa"></div>
<div class="a" style="left:303px;top:761px;width:1516px;height:1px;background:#e6e6e6"></div>
<svg style="left:314px;top:739px" width="22" height="18" viewBox="0 0 22 18"><rect x="0.5" y="0.5" width="15.4" height="12" fill="#f6f6f6" stroke="#8493a8" stroke-width="1"/><path d="M3.2 3.6 H12.6 M3.2 6.2 H12.6 M3.2 8.8 H9.4" stroke="#9a9a9a" stroke-width="1"/><path d="M9.6 9.8 L11.6 7.8 L13.6 10.4 L17.4 5.8 L19.4 7.4 L13.8 14.6 Z" fill="#21ad21" stroke="#158c15" stroke-width="0.6" stroke-linejoin="round"/></svg>
<div class="t" style="left:347px;top:735px;letter-spacing:-0.04px">Расходный ордер на товары</div>
<div class="t" style="left:603px;top:735px;letter-spacing:-0.03px">ЦБ-00000200</div>
<div class="t" style="left:749px;top:735px;letter-spacing:-0.18px">Средний</div>
<div class="t" style="left:873px;top:735px;letter-spacing:-0.18px">Отгружен</div>
<div class="t" style="left:1045px;top:735px;letter-spacing:-0.345px">Склад маркетплейс…</div>
<div class="t" style="left:1227px;top:735px;letter-spacing:-0.035px">24.10.2023 15:12:58</div>
<div class="t" style="left:1672px;top:735px;letter-spacing:-0.24px">Отгрузка по зака…</div>
<div class="a" style="left:303px;top:794px;width:1516px;height:1px;background:#e6e6e6"></div>
<svg style="left:314px;top:772px" width="22" height="18" viewBox="0 0 22 18"><rect x="0.5" y="0.5" width="15.4" height="12" fill="#f6f6f6" stroke="#8493a8" stroke-width="1"/><path d="M3.2 3.6 H12.6 M3.2 6.2 H12.6 M3.2 8.8 H9.4" stroke="#9a9a9a" stroke-width="1"/><path d="M9.6 9.8 L11.6 7.8 L13.6 10.4 L17.4 5.8 L19.4 7.4 L13.8 14.6 Z" fill="#21ad21" stroke="#158c15" stroke-width="0.6" stroke-linejoin="round"/></svg>
<div class="t" style="left:347px;top:768px;letter-spacing:-0.04px">Расходный ордер на товары</div>
<div class="t" style="left:603px;top:768px;letter-spacing:-0.03px">ЦБ-00000207</div>
<div class="t" style="left:749px;top:768px;letter-spacing:-0.18px">Средний</div>
<div class="t" style="left:873px;top:768px;letter-spacing:-0.18px">К отгрузке</div>
<div class="t" style="left:1045px;top:768px;letter-spacing:-0.345px">Склад маркетплейс…</div>
<div class="t" style="left:1227px;top:768px;letter-spacing:-0.035px">25.10.2023 0:00:00</div>
<div class="t" style="left:1672px;top:768px;letter-spacing:-0.24px">Отгрузка по зака…</div>
<div class="a" style="left:303px;top:827px;width:1516px;height:1px;background:#e6e6e6"></div>
<div class="a" style="left:303px;top:796px;width:1516px;height:30px;background:#fff2c8"></div>
<div class="a" style="left:592px;top:796px;width:1px;height:30px;background:#fff"></div>
<div class="a" style="left:738px;top:796px;width:1px;height:30px;background:#fff"></div>
<div class="a" style="left:862px;top:796px;width:1px;height:30px;background:#fff"></div>
<div class="a" style="left:1034px;top:796px;width:1px;height:30px;background:#fff"></div>
<div class="a" style="left:1216px;top:796px;width:1px;height:30px;background:#fff"></div>
<div class="a" style="left:1409px;top:796px;width:1px;height:30px;background:#fff"></div>
<div class="a" style="left:1661px;top:796px;width:1px;height:30px;background:#fff"></div>
<div class="a" style="left:303px;top:796px;width:289px;height:30px;background:#fde595"></div>
<svg style="left:314px;top:805px" width="22" height="18" viewBox="0 0 22 18"><rect x="0.5" y="0.5" width="15.4" height="12" fill="#f6f6f6" stroke="#8493a8" stroke-width="1"/><path d="M3.2 3.6 H12.6 M3.2 6.2 H12.6 M3.2 8.8 H9.4" stroke="#9a9a9a" stroke-width="1"/><path d="M9.6 9.8 L11.6 7.8 L13.6 10.4 L17.4 5.8 L19.4 7.4 L13.8 14.6 Z" fill="#21ad21" stroke="#158c15" stroke-width="0.6" stroke-linejoin="round"/></svg>
<div class="t" style="left:347px;top:801px;letter-spacing:-0.04px">Расходный ордер на товары</div>
<div class="t" style="left:603px;top:801px;letter-spacing:-0.03px">ЦБ-00000209</div>
<div class="t" style="left:749px;top:801px;letter-spacing:-0.18px">Средний</div>
<div class="t" style="left:873px;top:801px;letter-spacing:-0.18px">Отгружен</div>
<div class="t" style="left:1045px;top:801px;letter-spacing:-0.345px">Склад маркетплейс…</div>
<div class="t" style="left:1227px;top:801px;letter-spacing:-0.035px">25.10.2023 12:05:12</div>
<div class="t" style="left:1672px;top:801px;letter-spacing:-0.24px">Отгрузка по зака…</div>
<div class="a" style="left:1699px;top:857px;width:121px;height:27px;border:1px solid #a0a0a0;background:#fff"></div>
<div class="a" style="left:1700px;top:858px;width:59px;height:25px;background:linear-gradient(#fff 30%,#efefef)"></div>
<div class="a" style="left:1729px;top:858px;width:1px;height:25px;background:#a0a0a0"></div>
<div class="a" style="left:1759px;top:858px;width:1px;height:25px;background:#a0a0a0"></div>
<div class="a" style="left:1789px;top:858px;width:1px;height:25px;background:#a0a0a0"></div>
<svg style="left:1707px;top:867px" width="14" height="9" viewBox="0 0 14 9"><path d="M1.5 0.6 H12.5" stroke="#333" stroke-width="1.2"/><path d="M7 1 L13.6 8.4 H0.4 Z" fill="#333"/></svg>
<svg style="left:1737px;top:867px" width="14" height="9" viewBox="0 0 14 9"><path d="M7 1 L13.6 8.4 H0.4 Z" fill="#333"/></svg>
<svg style="left:1767px;top:868px" width="14" height="9" viewBox="0 0 14 9"><path d="M7 7.6 L13.6 0.6 H0.4 Z" fill="#a6a6a6"/></svg>
<svg style="left:1797px;top:868px" width="14" height="9" viewBox="0 0 14 9"><path d="M7 7.6 L13.6 0.6 H0.4 Z" fill="#a6a6a6"/><path d="M1.5 8 H12.5" stroke="#c4c4c4" stroke-width="1.4"/></svg>
<div class="a" style="left:770px;top:355px;width:304px;height:190px;background:#fff;border:1px solid #9e9e9e;box-shadow:0 2px 9px rgba(0,0,0,.22)"></div>
<div class="t" style="left:785px;top:365px;font-size:24.5px;line-height:30px;height:30px;color:#000;letter-spacing:-0.21px">Настройки</div>
<svg style="left:969px;top:373px" width="6" height="6" viewBox="0 0 6 6"><circle cx="3" cy="3" r="1.9" fill="#7a7a7a"/></svg>
<svg style="left:969px;top:378px" width="6" height="6" viewBox="0 0 6 6"><circle cx="3" cy="3" r="1.9" fill="#7a7a7a"/></svg>
<svg style="left:969px;top:383px" width="6" height="6" viewBox="0 0 6 6"><circle cx="3" cy="3" r="1.9" fill="#7a7a7a"/></svg>
<div class="a" style="left:1005px;top:376px;width:11px;height:11px;border:1.3px solid #333"></div>
<svg style="left:1042px;top:375px" width="12" height="12" viewBox="0 0 12 12"><path d="M0.5 0.5 L11.5 11.5 M11.5 0.5 L0.5 11.5" stroke="#333" stroke-width="1.3"/></svg>
<div class="t" style="left:786px;top:408px;color:#009646;letter-spacing:0.15px">Создавать:</div>
<div class="a" style="left:787px;top:432px;width:19px;height:19px;border-radius:50%;border:1px solid #9a9a9a;background:#fff;box-shadow:inset 0 1px 2px rgba(0,0,0,.12)"></div>
<div class="t" style="left:813px;top:431px;color:#3b3b3b;letter-spacing:-0.1px">по всем распоряжениям</div>
<div class="a" style="left:783px;top:460px;width:27px;height:27px;border:1px solid #f5c518"></div>
<div class="a" style="left:787px;top:464px;width:19px;height:19px;border-radius:50%;border:1px solid #9a9a9a;background:#fff;box-shadow:inset 0 1px 2px rgba(0,0,0,.12)"></div>
<div class="a" style="left:793px;top:470px;width:7px;height:7px;border-radius:50%;background:#009646"></div>
<div class="t" style="left:813px;top:463px;color:#3b3b3b;letter-spacing:-0.19px">по выделенным распоряжениям</div>
<div class="btn" style="left:891px;top:495px;width:56px;height:32px;background:linear-gradient(#ffe838,#ffe100 50%,#efd100);border-color:#b8a000;box-shadow:0 1px 0 #9a8600, 0 2px 2px rgba(0,0,0,.12)"></div>
<div class="t" style="left:891px;top:501px;width:56px;text-align:center;font-weight:bold;color:#2f3345">ОК</div>
<div class="btn" style="left:958px;top:495px;width:90px;height:32px"></div>
<div class="t" style="left:958px;top:501px;width:90px;text-align:center;color:#3b3b3b;letter-spacing:-0.35px">Отмена</div>
</body></html>
